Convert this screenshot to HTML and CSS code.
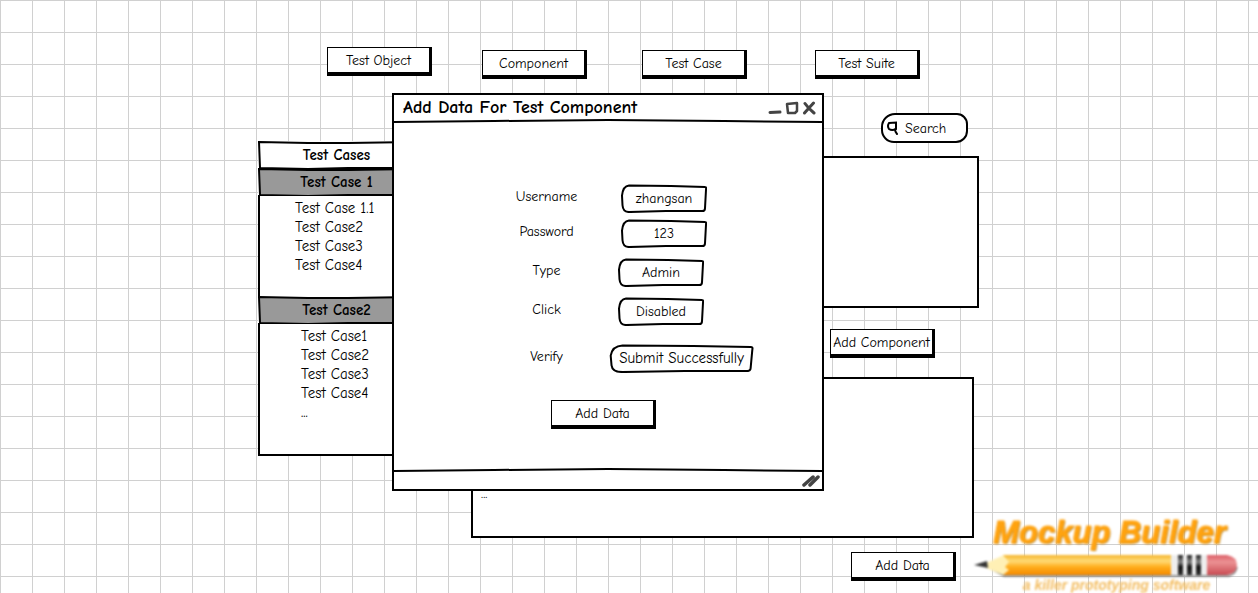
FILE: index.html
```html
<!DOCTYPE html>
<html lang="en">
<head>
<meta charset="utf-8">
<meta name="viewport" content="width=device-width, initial-scale=1">
<title>Add Data For Test Component</title>
<link rel="stylesheet" href="styles.css">
</head>
<body>
<svg class="defs" aria-hidden="true">
  <symbol id="box" viewBox="0 0 86 30" preserveAspectRatio="none">
    <path d="M8 1.500L50 2L84 3Q85.500 3 85 6L84 25Q84 28 81 28L45 28L8 29Q2 29 1.500 22L1 12Q2 2 8 1.500Z" fill="#fff" stroke="#000" stroke-width="2" vector-effect="non-scaling-stroke"/>
  </symbol>
  <symbol id="head" viewBox="0 0 157 28" preserveAspectRatio="none">
    <path d="M1 1L50 2L90 2L156 1L156 27L90 27L50 28L2 27Z" fill="currentColor" stroke="#000" stroke-width="2" vector-effect="non-scaling-stroke"/>
  </symbol>
</svg>
<div class="canvas">
  <nav class="nav">
    <button class="btn">Test Object</button>
    <button class="btn">Component</button>
    <button class="btn">Test Case</button>
    <button class="btn">Test Suite</button>
  </nav>

  <div class="workspace">
    <aside class="sidebar">
      <h2 class="head"><svg class="frame"><use href="#head"/></svg><span>Test Cases</span></h2>
      <h3 class="head head--gray"><svg class="frame"><use href="#head"/></svg><span>Test Case 1</span></h3>
      <ul class="list">
        <li>Test Case 1.1</li>
        <li>Test Case2</li>
        <li>Test Case3</li>
        <li>Test Case4</li>
      </ul>
      <h3 class="head head--gray"><svg class="frame"><use href="#head"/></svg><span>Test Case2</span></h3>
      <ul class="list list--last">
        <li>Test Case1</li>
        <li>Test Case2</li>
        <li>Test Case3</li>
        <li>Test Case4</li>
        <li>...</li>
      </ul>
    </aside>

    <main class="main">
      <label class="search">
        <svg class="search__icon" viewBox="0 0 13 15"><path d="M3 2L10 1.500L10 8Q6 10 3 8Q1 5 3 2M9 8Q9 11 11 13" fill="none" stroke="#000" stroke-width="2" stroke-linecap="round"/></svg>
        <input class="search__input" type="search" placeholder="Search" aria-label="Search">
      </label>
      <section class="panel panel--components"></section>
      <button class="btn btn--component">Add Component</button>
      <section class="panel panel--data">...</section>
      <button class="btn btn--data">Add Data</button>
    </main>
  </div>

  <section class="dialog" role="dialog" aria-labelledby="dialog-title">
    <header class="dialog__bar">
      <h1 class="dialog__title" id="dialog-title">Add Data For Test Component</h1>
      <div class="dialog__controls">
        <button class="icon" aria-label="Minimize"><svg viewBox="0 0 14 14"><path d="M2 11.500L12 11" fill="none" stroke="#444" stroke-width="3" stroke-linecap="round"/></svg></button>
        <button class="icon" aria-label="Maximize"><svg viewBox="0 0 14 14"><path d="M2 3L12 2L12 10L10 12L3 12Z" fill="none" stroke="#444" stroke-width="2.500" stroke-linejoin="round"/></svg></button>
        <button class="icon" aria-label="Close"><svg viewBox="0 0 14 14"><path d="M3 2.500Q6 7 12 12M11.500 2Q6 8 2.500 12" fill="none" stroke="#444" stroke-width="3" stroke-linecap="round"/></svg></button>
      </div>
    </header>
    <svg class="rule" viewBox="0 0 428 4" preserveAspectRatio="none"><path d="M0 3L100 2L214 1L330 2L428 3" fill="none" stroke="#000" stroke-width="2" vector-effect="non-scaling-stroke"/></svg>
    <form class="form">
      <label for="username">Username</label>
      <span class="field field--upper"><svg class="frame"><use href="#box"/></svg><input id="username" value="zhangsan"></span>
      <label for="password">Password</label>
      <span class="field field--upper"><svg class="frame"><use href="#box"/></svg><input id="password" value="123"></span>
      <label for="type">Type</label>
      <span class="field field--lower"><svg class="frame"><use href="#box"/></svg><input id="type" value="Admin"></span>
      <label for="click">Click</label>
      <span class="field field--lower"><svg class="frame"><use href="#box"/></svg><input id="click" value="Disabled"></span>
      <label for="verify">Verify</label>
      <span class="field field--wide"><svg class="frame"><use href="#box"/></svg><input id="verify" value="Submit Successfully"></span>
      <button class="btn form__submit" type="button">Add Data</button>
    </form>
    <svg class="rule" viewBox="0 0 428 4" preserveAspectRatio="none"><path d="M0 3L100 2L214 1L330 2L428 3" fill="none" stroke="#000" stroke-width="2" vector-effect="non-scaling-stroke"/></svg>
    <footer class="dialog__foot">
      <svg class="grip" viewBox="0 0 18 14"><path d="M2 11L11 3M8 11L16 3" fill="none" stroke="#444" stroke-width="3.500" stroke-linecap="round"/></svg>
    </footer>
  </section>

  <div class="logo">
    <span class="logo__name">Mockup Builder</span>
    <svg class="logo__pencil" viewBox="0 0 264 24">
      <defs>
        <linearGradient id="wood" x2="0" y2="1"><stop offset="0" stop-color="#f5b52c"/><stop offset=".3" stop-color="#ffdc78"/><stop offset=".6" stop-color="#ffad1c"/><stop offset="1" stop-color="#f58a00"/></linearGradient>
        <linearGradient id="rubber" x2="0" y2="1"><stop offset="0" stop-color="#dc6068"/><stop offset=".35" stop-color="#ec9294"/><stop offset="1" stop-color="#c94b52"/></linearGradient>
        <linearGradient id="metal" x2="0" y2="1"><stop offset="0" stop-color="#222"/><stop offset=".35" stop-color="#888"/><stop offset=".6" stop-color="#111"/><stop offset="1" stop-color="#333"/></linearGradient>
      </defs>
      <path d="M14 14L30 23H255Q262 21 263 14" fill="none" stroke="#777" stroke-width="1.500"/>
      <path d="M12 10L30 2L38 2V22H29L12 15Z" fill="#fff0b5"/>
      <path d="M0 12L13 8L14 15Z" fill="#333"/>
      <path d="M29 2H197V22H29L35 17L31 14L35 9Z" fill="url(#wood)"/>
      <path d="M197 2H233V22H197Z" fill="#eee"/>
      <path d="M204 2H209V22H204ZM213 2H218V22H213ZM222 2H227V22H222Z" fill="url(#metal)"/>
      <path d="M233 2H253Q263 4 263 12Q263 20 253 22H233Z" fill="url(#rubber)"/>
    </svg>
    <span class="logo__tag">a killer prototyping software</span>
  </div>
</div>
</body>
</html>
```
FILE: styles.css
```css
* { box-sizing: border-box; }

body {
  margin: 0;
  font-family: "Comic Sans MS", "Comic Neue", "Noto Sans", sans-serif;
  font-size: 14px;
  line-height: 19px;
  font-variant-ligatures: none;
  color: #000;
}

.defs { position: absolute; width: 0; height: 0; }

.canvas {
  position: relative;
  min-height: 100vh;
  overflow: hidden;
  background-color: #fff;
  background-image:
    linear-gradient(#d0d0d0 1px, transparent 1px),
    linear-gradient(90deg, #d0d0d0 1px, transparent 1px);
  background-size: 32px 32px;
}

button, input { font: inherit; color: inherit; }

.btn {
  display: block;
  width: 105px;
  height: 29px;
  padding: 0;
  background: #fff;
  border: solid #000;
  border-width: 1px 3px 4px 1px;
  border-radius: 0;
  white-space: nowrap;
}

.nav {
  display: grid;
  grid-template-columns: 155px 160px 173px 105px;
  align-items: end;
  height: 79px;
  padding: 47px 0 0 327px;
}
.nav .btn:first-child { align-self: start; }

.workspace {
  display: grid;
  grid-template-columns: 157px 508px;
  column-gap: 56px;
  align-items: start;
  padding-left: 258px;
}

.sidebar {
  margin-top: 62px;
  background: #fff;
  font-size: 15px;
}

.head {
  display: grid;
  grid-template: 100% / 100%;
  place-items: center;
  height: 28px;
  margin: 0 0 -1px;
  font-size: 15px;
  color: #fff;
}
.head--gray { color: #999; }
.head > * { grid-area: 1 / 1; }
.head span { color: #000; z-index: 1; }

.frame { display: block; width: 100%; height: 100%; overflow: visible; }

.list {
  margin: 0;
  padding: 4px 0 0 35px;
  height: 101px;
  border-left: 2px solid #000;
  list-style: none;
}
.list--last {
  height: 133px;
  padding-left: 41px;
  border-bottom: 2px solid #000;
}

.main { display: flex; flex-direction: column; }

.search {
  display: flex;
  align-items: center;
  width: 87px;
  height: 30px;
  margin: 34px 0 13px 410px;
  padding-left: 3px;
  background: #fff;
  border: 2px solid #000;
  border-radius: 14px 11px 12px 13px;
}
.search__icon { flex: none; width: 13px; height: 15px; }
.search__input {
  flex: 1;
  min-width: 0;
  padding: 0 0 0 6px;
  border: 0;
  background: none;
  outline: 0;
  appearance: none;
}
.search__input::placeholder { color: #000; }

.panel { background: #fff; border: 2px solid #000; }
.panel--components { height: 152px; margin-bottom: 21px; }
.btn--component { margin: 0 0 19px 359px; }
.panel--data {
  width: 503px;
  height: 161px;
  margin-bottom: 14px;
  padding: 105px 8px 0;
}
.btn--data { margin-left: 380px; }

.dialog {
  position: absolute;
  left: 392px;
  top: 93px;
  width: 432px;
  background: #fff;
  border: 2px solid #000;
}
.dialog__bar {
  display: flex;
  align-items: center;
  justify-content: space-between;
  height: 24px;
  padding: 2px 6px 0 9px;
}
.dialog__title { margin: 0; font-size: 18px; line-height: 22px; white-space: nowrap; }
.dialog__controls { display: flex; gap: 3px; }
.icon {
  width: 14px;
  height: 14px;
  padding: 0;
  border: 0;
  background: none;
}
.icon svg { display: block; }
.rule { display: block; width: 100%; height: 4px; }

.form {
  display: grid;
  grid-template-columns: 73px 145px;
  grid-template-rows: 36px 34px 44px 34px 60px 51px;
  column-gap: 26px;
  align-items: center;
  align-content: start;
  height: 345px;
  padding: 57px 0 0 116px;
}
.form label { text-align: center; padding-bottom: 4px; }
.field {
  display: grid;
  grid-template: 100% / 100%;
  width: 86px;
  height: 29px;
}
.field > * { grid-area: 1 / 1; }
.field--upper { margin-left: 12px; }
.field--lower { margin-left: 9px; }
.field--wide { width: 145px; }
.field input {
  width: 100%;
  min-width: 0;
  padding: 0;
  border: 0;
  background: none;
  text-align: center;
  z-index: 1;
}
.field--wide input { font-size: 15px; }
.form__submit { grid-column: 1 / -1; align-self: start; margin: 12px 0 0 41px; }

.dialog__foot {
  display: flex;
  align-items: center;
  justify-content: flex-end;
  height: 17px;
  padding-right: 2px;
}
.grip { width: 18px; height: 14px; }

.logo {
  position: absolute;
  right: 20px;
  bottom: 0;
  display: flex;
  flex-direction: column;
  align-items: center;
  width: 265px;
  height: 77px;
  font-family: "Liberation Sans", Arial, sans-serif;
  font-style: italic;
  font-weight: bold;
  white-space: nowrap;
  filter: blur(1px);
}
.logo__name {
  flex: none;
  height: 37px;
  padding-left: 8px;
  font-size: 31px;
  line-height: 34px;
  color: #ffa310;
  -webkit-text-stroke: 1px #ffa310;
  text-shadow: 1px 1px 1px #a87820;
}
.logo__pencil { flex: none; width: 264px; height: 24px; }
.logo__tag {
  flex: none;
  padding-left: 22px;
  font-size: 14px;
  line-height: 16px;
  color: #f3bd61;
}
```
